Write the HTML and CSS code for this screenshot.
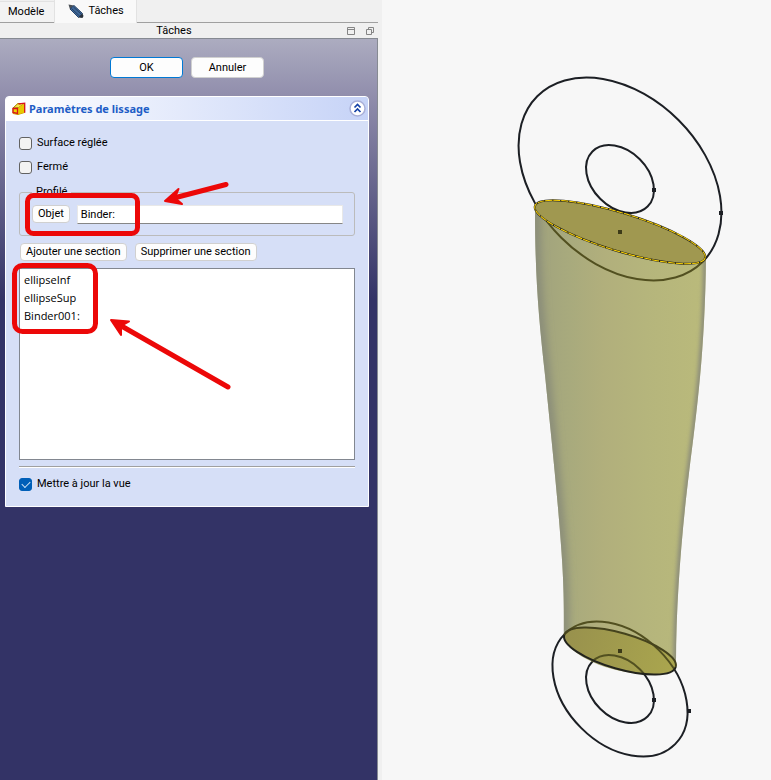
FILE: index.html
```html
<!DOCTYPE html>
<html lang="fr">
<head>
<meta charset="utf-8">
<title>Paramètres de lissage</title>
<link rel="stylesheet" href="styles.css">
</head>
<body>
<main class="app">
  <section class="dock">
    <nav class="tabs">
      <a class="tab" href="#modele">Modèle</a>
      <a class="tab tab-active" href="#taches">
        <svg class="pencil" viewBox="0 0 16 16" aria-hidden="true">
          <path d="M.5 1.500L6 2.500L2 6.500Z" fill="#4a4f55"/>
          <path d="M2 6L6 2.500L14.500 10.500L10.500 14.500Z" fill="#3f689c" stroke="#294568"/>
          <path d="M3.500 5.500L12 13.500M5.500 4L13.500 11.500" stroke="#213851" stroke-width=".8"/>
          <path d="M10.500 14.500L14.500 10.500L15.500 13L14.500 15Z" fill="#28313a"/>
        </svg>
        Tâches
      </a>
    </nav>
    <header class="dock-title">
      <h1 class="dock-name">Tâches</h1>
      <button class="dock-btn" type="button" aria-label="Réduire">
        <svg viewBox="0 0 8 8"><path d="M.5 .5h7v7h-7zM.5 2.500h7" fill="none" stroke="#858585"/></svg>
      </button>
      <button class="dock-btn" type="button" aria-label="Détacher">
        <svg viewBox="0 0 8 8"><path d="M.5 2.500h5v5h-5zM2.500 2.500v-2h5v5h-2" fill="none" stroke="#858585"/></svg>
      </button>
    </header>
    <form class="tasks">
      <div class="actions">
        <button class="btn btn-wide btn-default" type="button">OK</button>
        <button class="btn btn-wide" type="button">Annuler</button>
      </div>
      <section class="panel">
        <header class="panel-head">
          <svg class="loft" viewBox="0 0 14 14" aria-hidden="true">
            <path d="M1 6L6 1.500L12.500 1.500L12.500 10.500L6 12.500L1 11.500Z" fill="#edd400" stroke="#c99b00"/>
            <path d="M1 6L6 1.500L12.500 1.500L6.500 5.500Z" fill="#f6e54b" stroke="#8f7300" stroke-width=".7"/>
            <path d="M6.500 5.500L12.500 1.500L12.500 10.500L6.500 12Z" fill="#e8c800"/>
            <path d="M1 6.500L5.500 6.500L5.500 11.500L1 10.500ZM6.500 2L12.700 1.200L12.700 10.700" fill="none" stroke="#d8141c" stroke-width="1.300"/>
          </svg>
          <h2 class="panel-name">Paramètres de lissage</h2>
          <button class="fold" type="button" aria-label="Replier">
            <svg viewBox="0 0 17 17">
              <circle cx="8.500" cy="8.500" r="7.500" fill="#fff" stroke="#a9b0d8" stroke-width="1.500"/>
              <path d="M5.500 7.500l3-3 3 3M5.500 12l3-3 3 3" fill="none" stroke="#1542a6" stroke-width="1.700"/>
            </svg>
          </button>
        </header>
        <div class="panel-body">
          <label class="check"><input type="checkbox">Surface réglée</label>
          <label class="check"><input type="checkbox">Fermé</label>
          <fieldset class="group">
            <legend>Profilé</legend>
            <button class="btn" type="button">Objet</button>
            <input class="field" type="text" value="Binder:" aria-label="Profilé">
          </fieldset>
          <div class="sections">
            <button class="btn" type="button">Ajouter une section</button>
            <button class="btn" type="button">Supprimer une section</button>
          </div>
          <ul class="list">
            <li>ellipseInf</li>
            <li>ellipseSup</li>
            <li>Binder001:</li>
          </ul>
          <hr class="rule">
          <label class="check"><input type="checkbox" checked>Mettre à jour la vue</label>
        </div>
      </section>
    </form>
    <svg class="notes" viewBox="0 0 382 400" width="382" height="400" aria-hidden="true">
      <g fill="none" stroke="#ec0808" stroke-width="5" stroke-linecap="round" stroke-linejoin="round">
        <rect x="27.500" y="195.500" width="110" height="38" rx="6"/>
        <rect x="14.500" y="265.500" width="81" height="66" rx="8"/>
        <path d="M226 184.500L172 198.500M228 387L118 324"/>
      </g>
      <g fill="#ec0808" stroke="#ec0808" stroke-width="2" stroke-linejoin="round">
        <path d="M165 201L178.500 189L175 198L182 204Z"/>
        <path d="M111 320L129 321.500L121 326L121 335Z"/>
      </g>
    </svg>
  </section>
  <section class="view">
    <svg class="scene" viewBox="382 0 389 780" preserveAspectRatio="xMidYMin meet" role="img" aria-label="Lissage entre deux ellipses">
      <defs>
        <linearGradient id="skin" gradientUnits="userSpaceOnUse" x1="535" x2="706" y1="0" y2="0">
          <stop offset="0" stop-color="#a0a27d"/>
          <stop offset=".2" stop-color="#a8aa7d"/>
          <stop offset=".4" stop-color="#b1af7c"/>
          <stop offset=".65" stop-color="#b5b57c"/>
          <stop offset="1" stop-color="#baba7b"/>
        </linearGradient>
        <linearGradient id="base" x1="0" x2="1" y1="0" y2="0">
          <stop offset="0" stop-color="#98914d"/>
          <stop offset="1" stop-color="#aaa64e"/>
        </linearGradient>
        <filter id="soft" filterUnits="userSpaceOnUse" x="500" y="180" width="240" height="520"><feGaussianBlur stdDeviation="4"/></filter>
        <filter id="softer" filterUnits="userSpaceOnUse" x="500" y="180" width="240" height="520"><feGaussianBlur stdDeviation="2"/></filter>
        <clipPath id="body">
          <path d="M535 208C535 280 539 320 545 375C550 425 557 490 561 545C564 585 564 605 564 637C568 655 610 675 653 674C669 673 676 671 676 664C676 600 682 530 689 473C697 410 705 350 706 257C680 230 600 200 552 200C540 200 535 202 535 208Z"/>
        </clipPath>
        <g id="rings" fill="none" stroke-width="2">
          <ellipse cx="620" cy="179" rx="117" ry="83" transform="rotate(45 620 179)"/>
          <ellipse cx="620" cy="179" rx="39" ry="28" transform="rotate(45 620 179)"/>
          <ellipse cx="620" cy="689" rx="78" ry="55" transform="rotate(45 620 689)"/>
          <ellipse cx="620" cy="689" rx="39" ry="28" transform="rotate(45 620 689)"/>
        </g>
      </defs>
      <use href="#rings" stroke="#1c1f24"/>
      <g clip-path="url(#body)">
        <rect x="530" y="190" width="180" height="490" fill="url(#skin)"/>
        <path d="M535 190V208C535 280 539 320 545 375C550 425 557 490 561 545C564 585 564 605 564 680" fill="none" stroke="#858878" stroke-width="9" filter="url(#soft)"/>
        <path d="M676 690V664C676 600 682 530 689 473C697 410 705 350 706 257V190" fill="none" stroke="#85867a" stroke-width="5" filter="url(#softer)"/>
      </g>
      <ellipse cx="620" cy="651" rx="58" ry="18" transform="rotate(16 620 651)" fill="url(#base)"/>
      <g clip-path="url(#body)"><use href="#rings" stroke="#525020"/></g>
      <g fill="none" stroke-width="2" transform="rotate(16 620 651)">
        <path d="M562 651A58 18 0 0 1 678 651" stroke="#45431d"/>
        <path d="M562 651A58 18 0 0 0 678 651" stroke="#22231d"/>
      </g>
      <g transform="rotate(17 620 232)">
        <ellipse cx="620" cy="232" rx="89" ry="19" fill="#a09850" stroke="#24241c" stroke-width="2"/>
        <ellipse cx="620" cy="232" rx="89" ry="19" fill="none" stroke="#ffd500" stroke-width="1" stroke-dasharray="7 1"/>
      </g>
      <path d="M652 188h4v4h-4zM719 211h4v4h-4zM652 698h4v4h-4zM687 709h4v4h-4z" fill="#1c1f24"/>
      <path d="M618 230h4v4h-4zM618 649h4v4h-4z" fill="#3c3a18"/>
    </svg>
  </section>
</main>
</body>
</html>
```
FILE: styles.css
```css
* { box-sizing: border-box; }
body {
  margin: 0;
  background: #f7f7f7;
  color: #000;
  font: 11px/16px Roboto, "Open Sans", sans-serif;
}
button, input { font: inherit; color: inherit; }
.app {
  display: grid;
  grid-template-columns: minmax(382px, 49%) 1fr;
  min-height: 100vh;
}
.dock {
  position: relative;
  display: flex;
  flex-direction: column;
  padding-right: 4px;
  background: #f0f0f0;
}
.tabs {
  display: flex;
  align-items: flex-end;
  height: 23px;
  border-bottom: 1px solid #a0a0a0;
}
.tab {
  display: flex;
  align-items: center;
  gap: 4px;
  height: 21px;
  padding: 0 10px 0 8px;
  border-top: 1px solid #e2e2e2;
  background: #f3f3f3;
  color: inherit;
  text-decoration: none;
}
.tab-active {
  height: 23px;
  margin-bottom: -1px;
  padding: 0 12px 1px 13px;
  border: 1px solid #e2e2e2;
  border-width: 0 1px;
  background: #f9f9f9;
}
.pencil { width: 16px; height: 16px; }
.dock-title {
  display: flex;
  align-items: center;
  gap: 11px;
  height: 16px;
  padding-right: 4px;
  border-bottom: 1px solid #868a92;
}
.dock-name {
  flex: 1;
  margin: 0;
  padding-left: 12px;
  font: inherit;
  text-align: center;
}
.dock-btn {
  width: 8px;
  height: 8px;
  padding: 0;
  border: 0;
  background: none;
}
.dock-btn svg, .fold svg { display: block; width: 100%; height: 100%; }
.tasks {
  flex: 1;
  padding: 18px 8px 0 5px;
  border-right: 1px solid #868a92;
  background: linear-gradient(#acacc0 0, #8f8cab 60px, #333366 260px);
}
.actions {
  display: flex;
  justify-content: center;
  gap: 8px;
  margin-bottom: 18px;
}
.btn {
  height: 18px;
  padding: 0 5px;
  border: 1px solid #d0d0d0;
  border-radius: 4px;
  background: #fdfdfd;
  line-height: 16px;
  white-space: nowrap;
}
.btn-wide { width: 73px; height: 21px; }
.btn-default { border-color: #0078d4; }
.panel {
  border: 1px solid #fff;
  border-radius: 4px 4px 0 0;
  background: #d6dff7;
}
.panel-head {
  display: flex;
  align-items: center;
  gap: 3px;
  height: 24px;
  padding: 0 2px 0 6px;
  border-bottom: 1px solid #fff;
  border-radius: 3px 3px 0 0;
  background: linear-gradient(90deg, #fff, #c6d3f7);
}
.loft { width: 14px; height: 14px; }
.panel-name {
  flex: 1;
  margin: 0;
  color: #215dc6;
  font-family: "Noto Sans", sans-serif;
  font-size: 11px;
  font-weight: 700;
}
.fold {
  width: 17px;
  height: 17px;
  padding: 0;
  border: 0;
  background: none;
}
.panel-body { padding: 14px 13px; }
.check {
  display: flex;
  align-items: center;
  gap: 5px;
  height: 16px;
}
.check + .check { margin-top: 8px; }
.check input {
  appearance: none;
  width: 13px;
  height: 13px;
  margin: 0;
  border: 1px solid #626262;
  border-radius: 3px;
  background: #f3f3f3;
}
.check input:checked {
  display: grid;
  place-items: center;
  border-color: #005fb8;
  background: #005fb8;
}
.check input:checked::before {
  content: "";
  width: 7px;
  height: 4px;
  margin-bottom: 2px;
  border: solid #cfe4f7;
  border-width: 0 0 1px 1px;
  transform: rotate(-45deg);
}
.group {
  display: flex;
  gap: 7px;
  min-width: 0;
  height: 52px;
  margin: 9px 0 7px;
  padding: 5px 11px 0 12px;
  border: 1px solid #bbb;
  border-radius: 3px;
}
.group legend { padding: 0 4px; }
.field {
  flex: 1;
  min-width: 0;
  height: 19px;
  padding: 0 3px;
  border: 1px solid #e8e8e8;
  border-bottom-color: #868686;
  background: #fff;
}
.sections { display: flex; gap: 8px; padding-left: 1px; }
.list {
  height: 192px;
  margin: 7px 0 6px;
  padding: 2px 4px;
  border: 1px solid #828790;
  background: #fff;
  font-family: "Open Sans", sans-serif;
  line-height: 18px;
  list-style: none;
}
.rule {
  height: 2px;
  margin: 0 0 8px;
  border: 0;
  border-top: 1px solid #a0a0a0;
  border-bottom: 1px solid #fff;
}
.notes {
  position: absolute;
  top: 0;
  left: 0;
  pointer-events: none;
}
.view { min-width: 0; }
.scene { display: block; width: 100%; height: auto; }
```
